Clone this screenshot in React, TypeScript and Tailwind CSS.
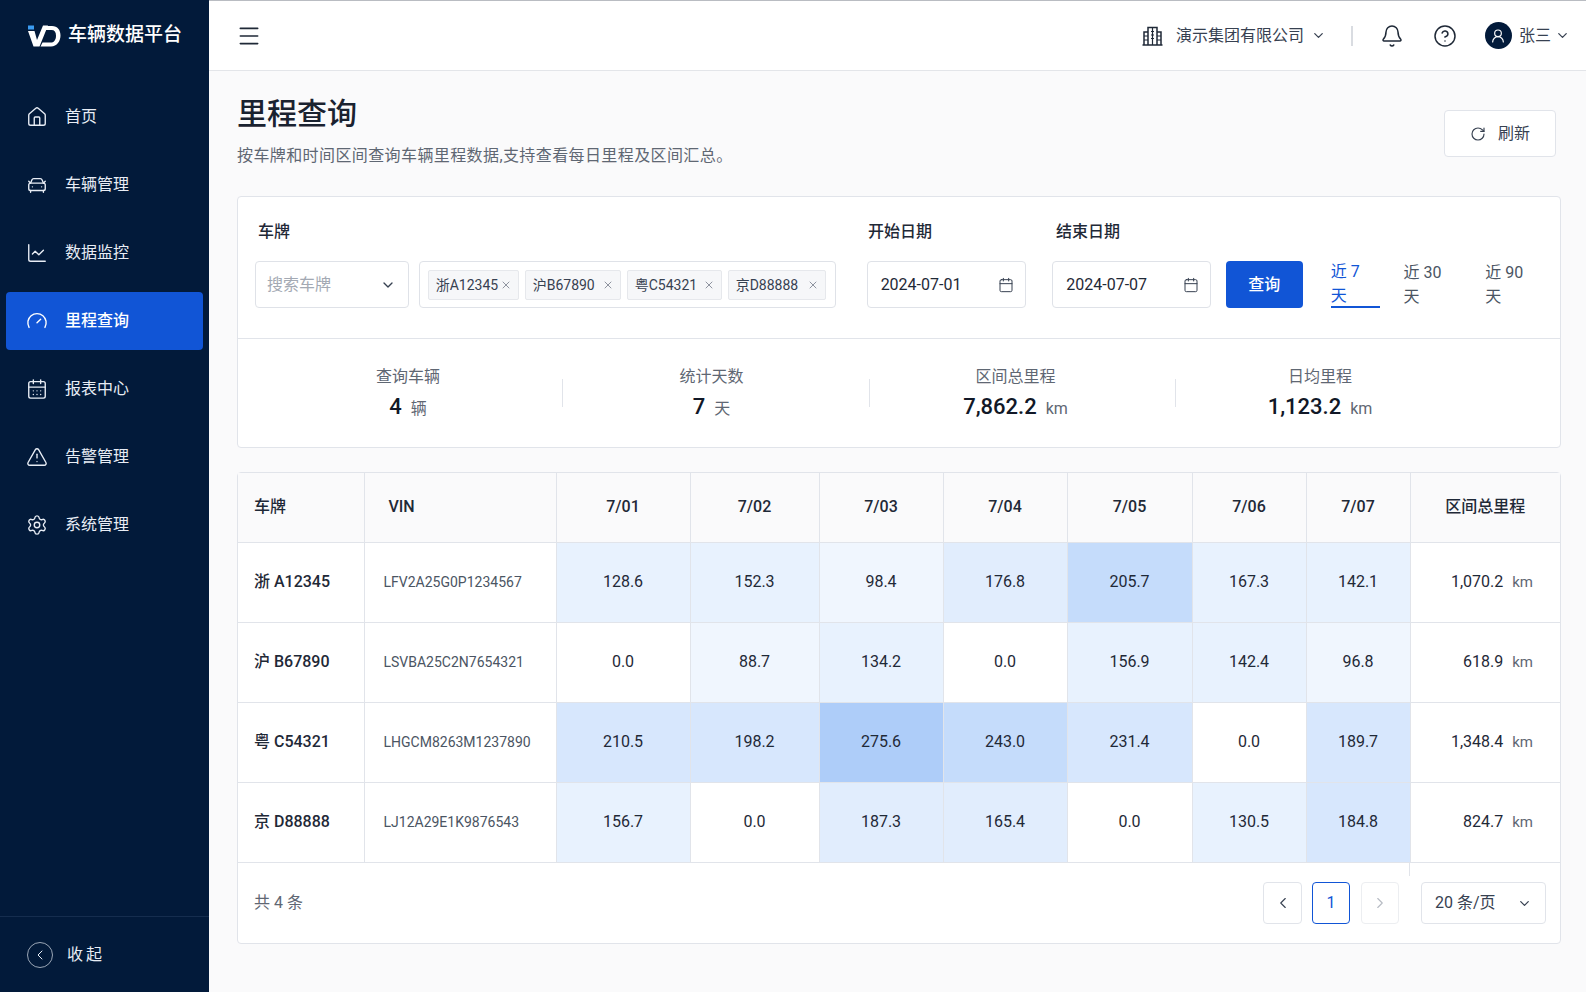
import {
  Bell,
  CalendarDays,
  Calendar,
  CarFront,
  ChartLine,
  ChevronDown,
  ChevronLeft,
  ChevronRight,
  CircleHelp,
  Gauge,
  House,
  Menu,
  RotateCw,
  Settings,
  TriangleAlert,
  UserRound,
  X,
} from "lucide-react"

const navItems = [
  { label: "首页", icon: House },
  { label: "车辆管理", icon: CarFront },
  { label: "数据监控", icon: ChartLine },
  { label: "里程查询", icon: Gauge, active: true },
  { label: "报表中心", icon: CalendarDays },
  { label: "告警管理", icon: TriangleAlert },
  { label: "系统管理", icon: Settings },
]

const tags = [
  { label: "浙A12345", width: "w-[91px]" },
  { label: "沪B67890", width: "w-[96px]" },
  { label: "粤C54321", width: "w-[95px]" },
  { label: "京D88888", width: "w-[98px]" },
]

const stats = [
  { label: "查询车辆", value: "4", unit: "辆", cell: "w-[324px] pl-[16px]" },
  { label: "统计天数", value: "7", unit: "天", cell: "w-[307px] pr-[9px] border-l border-[#e1e4ea]" },
  { label: "区间总里程", value: "7,862.2", unit: "km", cell: "w-[306px] pr-[14px] border-l border-[#e1e4ea]" },
  { label: "日均里程", value: "1,123.2", unit: "km", cell: "flex-1 pr-[96px] border-l border-[#e1e4ea]" },
]

const days = ["7/01", "7/02", "7/03", "7/04", "7/05", "7/06", "7/07"]

const shades = [
  "bg-white",
  "bg-[#f0f6fe]",
  "bg-[#e8f2fe]",
  "bg-[#e1edfd]",
  "bg-[#d7e7fd]",
  "bg-[#c5dcfb]",
  "bg-[#aecdf9]",
]

const rows = [
  {
    plate: "浙 A12345",
    vin: "LFV2A25G0P1234567",
    total: "1,070.2",
    cells: [["128.6", 2], ["152.3", 2], ["98.4", 1], ["176.8", 3], ["205.7", 5], ["167.3", 2], ["142.1", 2]],
  },
  {
    plate: "沪 B67890",
    vin: "LSVBA25C2N7654321",
    total: "618.9",
    cells: [["0.0", 0], ["88.7", 1], ["134.2", 2], ["0.0", 0], ["156.9", 2], ["142.4", 2], ["96.8", 1]],
  },
  {
    plate: "粤 C54321",
    vin: "LHGCM8263M1237890",
    total: "1,348.4",
    cells: [["210.5", 4], ["198.2", 4], ["275.6", 6], ["243.0", 5], ["231.4", 4], ["0.0", 0], ["189.7", 4]],
  },
  {
    plate: "京 D88888",
    vin: "LJ12A29E1K9876543",
    total: "824.7",
    cells: [["156.7", 2], ["0.0", 0], ["187.3", 3], ["165.4", 3], ["0.0", 0], ["130.5", 2], ["184.8", 4]],
  },
] as const

function Logo() {
  return (
    <svg width="34" height="22" viewBox="0 0 34 22" fill="none">
      <rect x="1" y="0.5" width="6" height="4" fill="#3b9cf2" />
      <path d="M1 6h6.5l2.5 9 6-14.5h5L12.5 21.5H6.5z" fill="#fff" />
      <path d="M19 1h6c5.5 0 8.5 4 8.5 9.5S30 21.5 24 21.5H13.5l2-4H24c3.2 0 5-3 5-6.8C29 7 27.5 5 24.500 5h-7z" fill="#fff" />
    </svg>
  )
}

function BuildingIcon() {
  return (
    <svg width="21" height="20" viewBox="0 0 21 20" fill="none" stroke="#1f2937" strokeWidth="1.5">
      <path d="M0.500 19h20" />
      <path d="M2 19V6h4M6 19V1.500h9V19M15 6h4v13" />
      <path d="M9 5.500h3M9 9h3M9 12.500h3M10.500 1.500V19M2 10h4M2 14h4M15 10h4M15 14h4" strokeWidth="1.200" />
    </svg>
  )
}

function Sidebar() {
  return (
    <aside className="flex w-[209px] shrink-0 flex-col bg-[#021a3a] text-[#e8edf5]">
      <div className="flex h-[71px] items-center gap-[7px] pl-[27px]">
        <Logo />
        <span className="text-[19px] font-medium text-white">车辆数据平台</span>
      </div>
      <nav className="flex flex-1 flex-col gap-[10px] px-[6px] pt-[17px]">
        {navItems.map(item => (
          <div
            key={item.label}
            className={
              item.active
                ? "flex h-[58px] items-center gap-[17px] rounded-[4px] bg-[#1155d6] pl-[20px] font-medium text-white"
                : "flex h-[58px] items-center gap-[17px] pl-[20px]"
            }
          >
            <item.icon size={22} strokeWidth={1.5} />
            <span className="text-base">{item.label}</span>
          </div>
        ))}
      </nav>
      <div className="flex h-[76px] items-center gap-[14px] border-t border-[#152d4e] pl-[27px]">
        <span className="flex h-[26px] w-[26px] items-center justify-center rounded-full border-[1.5px] border-[#9aa6b6]">
          <ChevronLeft size={16} strokeWidth={1.5} />
        </span>
        <span className="text-base tracking-[3px]">收起</span>
      </div>
    </aside>
  )
}

function TopBar() {
  return (
    <header className="flex h-[71px] shrink-0 items-center justify-between border-b border-[#e3e5e9] border-t-[#b9bcc2] border-t bg-white pl-[27px] pr-[16px]">
      <Menu size={26} strokeWidth={1.5} className="text-[#1f2937]" />
      <div className="flex items-center text-[#1f2937]">
        <BuildingIcon />
        <span className="ml-[13px] text-base text-[#374151]">演示集团有限公司</span>
        <ChevronDown size={15} className="ml-[7px] text-[#374151]" />
        <span className="ml-[25px] h-[20px] w-[2px] bg-[#d9dce1]" />
        <Bell size={24} strokeWidth={1.5} className="ml-[27px]" />
        <CircleHelp size={24} strokeWidth={1.5} className="ml-[29px]" />
        <span className="ml-[28px] flex h-[27px] w-[27px] items-center justify-center rounded-full bg-[#021a3a] text-white">
          <UserRound size={16} strokeWidth={1.75} />
        </span>
        <span className="ml-[7px] text-base text-[#374151]">张三</span>
        <ChevronDown size={15} className="ml-[4px] text-[#374151]" />
      </div>
    </header>
  )
}

function FilterCard() {
  return (
    <section className="rounded-[4px] border border-[#e1e4ea] bg-white">
      <div className="h-[141px] px-[17px] pt-[23px]">
        <div className="flex text-base font-medium leading-[24px] text-[#1f2937]">
          <span className="ml-[3px] w-[610px]">车牌</span>
          <span className="w-[188px]">开始日期</span>
          <span>结束日期</span>
        </div>
        <div className="mt-[17px] flex h-[47px] items-stretch">
          <div className="flex w-[154px] items-center justify-between rounded-[4px] border border-[#dfe2e8] pl-[11px] pr-[12px] text-base text-[#a3a9b3]">
            搜索车牌
            <ChevronDown size={16} className="text-[#374151]" />
          </div>
          <div className="ml-[10px] flex w-[418px] items-center gap-[6px] rounded-[4px] border border-[#dfe2e8] pl-[8px]">
            {tags.map(tag => (
              <span
                key={tag.label}
                className={`${tag.width} flex h-[30px] items-center justify-between rounded-[2px] border border-[#e6e8ec] bg-[#f6f7f9] pl-[7px] pr-[6px] text-sm text-[#374151]`}
              >
                {tag.label}
                <X size={12} strokeWidth={1.5} className="text-[#6b7280]" />
              </span>
            ))}
          </div>
          <div className="ml-[31px] flex w-[160px] items-center justify-between rounded-[4px] border border-[#dfe2e8] pl-[13px] pr-[11px] text-base text-[#1f2937]">
            2024-07-01
            <Calendar size={16} strokeWidth={1.5} className="text-[#374151]" />
          </div>
          <div className="ml-[26px] flex w-[159px] items-center justify-between rounded-[4px] border border-[#dfe2e8] pl-[13px] pr-[11px] text-base text-[#1f2937]">
            2024-07-07
            <Calendar size={16} strokeWidth={1.5} className="text-[#374151]" />
          </div>
          <button
            type="button"
            className="ml-[15px] w-[77px] rounded-[4px] bg-[#1155d6] text-base font-medium text-white"
          >
            查询
          </button>
          <div className="ml-[28px] flex gap-[24px] text-base text-[#4b5563]">
            <span className="flex items-center border-b-2 border-[#1155d6] text-[#1155d6]">近 7 天</span>
            <span className="flex items-center">近 30 天</span>
            <span className="flex items-center">近 90 天</span>
          </div>
        </div>
      </div>
      <div className="flex h-[109px] items-center border-t border-[#e1e4ea]">
        {stats.map(stat => (
          <div key={stat.label} className={`${stat.cell} flex h-[28px] flex-col items-center justify-center`}>
            <span className="text-base leading-[24px] text-[#5f6773]">{stat.label}</span>
            <span className="mt-[3px] flex items-baseline gap-[9px] leading-[30px]">
              <span className="text-[22px] font-medium text-[#111827]">{stat.value}</span>
              <span className="text-base text-[#5f6773]">{stat.unit}</span>
            </span>
          </div>
        ))}
      </div>
    </section>
  )
}

function MileageTable() {
  const th = "border-l border-[#e1e4ea] text-base font-medium text-[#1f2937]"
  const td = "border-l border-t border-[#e1e4ea]"

  return (
    <section className="relative mt-[24px] rounded-[4px] border border-[#e1e4ea] bg-white">
      <table className="w-full table-fixed border-collapse">
        <colgroup>
          <col className="w-[126px]" />
          <col className="w-[192px]" />
          <col className="w-[134px]" />
          <col className="w-[129px]" />
          <col className="w-[124px]" />
          <col className="w-[124px]" />
          <col className="w-[125px]" />
          <col className="w-[114px]" />
          <col className="w-[104px]" />
          <col />
        </colgroup>
        <thead>
          <tr className="h-[69px] bg-[#fafafb]">
            <th className="pl-[16px] text-left text-base font-medium text-[#1f2937]">车牌</th>
            <th className={`${th} pl-[24px] text-left`}>VIN</th>
            {days.map(day => (
              <th key={day} className={th}>
                {day}
              </th>
            ))}
            <th className={th}>区间总里程</th>
          </tr>
        </thead>
        <tbody>
          {rows.map(row => (
            <tr key={row.plate} className="h-[80px]">
              <td className="border-t border-[#e1e4ea] pl-[16px] text-base font-medium text-[#1f2937]">
                {row.plate}
              </td>
              <td className={`${td} pl-[19px] text-sm text-[#4b5563]`}>{row.vin}</td>
              {row.cells.map(([value, shade], index) => (
                <td key={index} className={`${td} ${shades[shade]} text-center text-base text-[#1f2937]`}>
                  {value}
                </td>
              ))}
              <td className={`${td} pr-[27px] text-right text-base text-[#1f2937]`}>
                {row.total}
                <span className="ml-[9px] text-[15px] text-[#5f6773]">km</span>
              </td>
            </tr>
          ))}
        </tbody>
      </table>
      <div className="flex h-[81px] items-center justify-between border-t border-[#e1e4ea] pl-[16px] pr-[14px]">
        <span className="text-base text-[#5f6773]">共 4 条</span>
        <div className="flex items-center">
          <button
            type="button"
            className="flex h-[42px] w-[39px] items-center justify-center rounded-[4px] border border-[#e1e4ea] text-[#374151]"
          >
            <ChevronLeft size={18} strokeWidth={1.5} />
          </button>
          <button
            type="button"
            className="ml-[10px] flex h-[42px] w-[38px] items-center justify-center rounded-[4px] border border-[#1155d6] text-base text-[#1155d6]"
          >
            1
          </button>
          <button
            type="button"
            className="ml-[11px] flex h-[42px] w-[38px] items-center justify-center rounded-[4px] border border-[#eceef1] text-[#b6bbc3]"
          >
            <ChevronRight size={18} strokeWidth={1.5} />
          </button>
          <div className="ml-[22px] flex h-[42px] w-[125px] items-center justify-between rounded-[4px] border border-[#e1e4ea] pl-[13px] pr-[13px] text-base text-[#374151]">
            20 条/页
            <ChevronDown size={15} />
          </div>
        </div>
      </div>
      <span className="absolute bottom-[67px] left-[1171px] h-[14px] w-px bg-[#e1e4ea]" />
    </section>
  )
}

export default function App() {
  return (
    <div className="flex h-[992px] w-full overflow-hidden bg-[#fafafb] font-['Roboto','Noto_Sans_CJK_SC',sans-serif]">
      <Sidebar />
      <div className="flex min-w-0 flex-1 flex-col">
        <TopBar />
        <main className="flex-1 pl-[28px] pr-[25px]">
          <div className="flex h-[125px] items-start justify-between">
            <div>
              <h1 className="mt-[22px] text-[30px] font-medium leading-[42px] text-[#1a2230]">里程查询</h1>
              <p className="mt-[9px] text-base tracking-[0.4px] text-[#5f6773]">
                按车牌和时间区间查询车辆里程数据,支持查看每日里程及区间汇总。
              </p>
            </div>
            <button
              type="button"
              className="mr-[5px] mt-[39px] flex h-[47px] w-[112px] items-center justify-center gap-[12px] rounded-[4px] border border-[#e1e4ea] bg-white text-base text-[#374151]"
            >
              <RotateCw size={16} strokeWidth={1.75} />
              刷新
            </button>
          </div>
          <FilterCard />
          <MileageTable />
        </main>
      </div>
    </div>
  )
}
